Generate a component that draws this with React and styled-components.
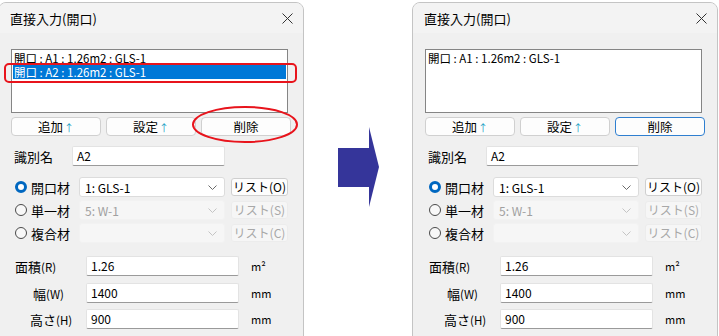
import React from 'react';
import styled, { createGlobalStyle } from 'styled-components';

const GlobalStyle = createGlobalStyle`
  html, body {
    margin: 0;
    padding: 0;
    background: #fff;
  }
  body {
    font-family: "Noto Sans CJK JP", "Noto Sans", sans-serif;
    color: #000;
  }
`

const Page = styled.div`
  width: 719px;
  height: 336px;
  overflow: hidden;
  display: flex;
  align-items: flex-start;
  padding-top: 2px;
  box-sizing: border-box;
`

const Dialog = styled.div`
  flex: none;
  width: 306px;
  height: 352px;
  box-sizing: border-box;
  margin-left: ${p => p.$offset || 0}px;
  border: 1px solid #c4c4c4;
  border-radius: 8px 8px 0 0;
  background: #f0f0f0;
  overflow: hidden;
`

const TitleBar = styled.div`
  height: 30px;
  display: flex;
  align-items: center;
  justify-content: space-between;
  padding: 0 10px 0 11px;
  background: #f3f3f3;
  font-size: 13px;
`

const Close = styled.svg`
  width: 11px;
  height: 11px;
`

const ListBox = styled.div`
  position: relative;
  margin: 16px 0 0 12px;
  width: 277px;
  height: 64px;
  box-sizing: border-box;
  border: 1px solid #858585;
  background: #fff;
  padding: 1px;
`

const ListItem = styled.div`
  height: 14px;
  font-size: 11.5px;
  line-height: 14px;
  padding-left: 1px;
  white-space: nowrap;
  background: ${p => (p.$selected ? '#0078d7' : 'transparent')};
  color: ${p => (p.$selected ? '#fff' : '#000')};
`

const RedBox = styled.div`
  position: absolute;
  left: -8px;
  top: 13px;
  width: 293px;
  height: 20px;
  box-sizing: border-box;
  border: 2px solid #e8141c;
  border-radius: 5px;
`

const ButtonRow = styled.div`
  position: relative;
  margin: 4px 0 0 12px;
  display: grid;
  grid-template-columns: repeat(3, 90px);
  gap: 5px;
  height: 19px;
`

const PushButton = styled.div`
  box-sizing: border-box;
  height: 19px;
  border: 1px solid ${p => (p.$focus ? '#2f7fd0' : '#d0d0d0')};
  border-radius: 4px;
  background: #fdfdfd;
  font-size: 12.5px;
  line-height: 17px;
  text-align: center;
`

const UpMark = styled.span`
  color: #1b9fc4;
  font-size: 10px;
  margin-left: 1px;
`

const Ellipse = styled.svg`
  position: absolute;
  left: 181px;
  top: -11px;
  width: 106px;
  height: 37px;
  overflow: visible;
`

const Row = styled.div`
  display: flex;
  align-items: center;
  height: 20px;
  margin-top: ${p => p.$top}px;
  padding-left: ${p => p.$indent}px;
`

const Label = styled.div`
  width: ${p => p.$width}px;
  flex: none;
  font-size: 13px;
  white-space: nowrap;
`

const Key = styled.span`
  font-size: 11.5px;
`

const TextBox = styled.div`
  box-sizing: border-box;
  width: 153px;
  height: 20px;
  background: #fff;
  border: 1px solid #e3e3e3;
  border-bottom-color: #9a9a9a;
  border-radius: 2px;
  padding-left: 4px;
  font-size: 12px;
  line-height: 18px;
`

const Radio = styled.div`
  flex: none;
  box-sizing: border-box;
  width: 12px;
  height: 12px;
  border-radius: 50%;
  margin-right: 4px;
  border: ${p => (p.$on ? '3.5px solid #0067c0' : '1px solid #4a4a4a')};
  background: ${p => (p.$on ? '#fff' : '#f8f8f8')};
`

const Select = styled.div`
  box-sizing: border-box;
  width: 146px;
  height: 20px;
  display: flex;
  align-items: center;
  justify-content: space-between;
  padding: 0 7px 0 5px;
  background: ${p => (p.$disabled ? '#f6f6f6' : '#fff')};
  border: 1px solid ${p => (p.$disabled ? '#f2f2f2' : '#dcdcdc')};
  border-radius: 3px;
  font-size: 12px;
  color: ${p => (p.$disabled ? '#a0a0a0' : '#000')};
`

const Chevron = styled.svg`
  width: 9px;
  height: 5px;
`

const ListButton = styled.div`
  box-sizing: border-box;
  width: 57px;
  height: 18px;
  margin-left: 6px;
  border: 1px solid ${p => (p.$disabled ? '#ececec' : '#cfcfcf')};
  border-radius: 3px;
  background: ${p => (p.$disabled ? '#f6f6f6' : '#fdfdfd')};
  color: ${p => (p.$disabled ? '#a8a8a8' : '#000')};
  font-size: 12px;
  line-height: 16px;
  text-align: center;
`

const Unit = styled.div`
  margin-left: 12px;
  font-size: 11px;
`

const ArrowCol = styled.div`
  flex: 1;
  display: flex;
  justify-content: center;
  padding-top: 125px;
`

const Chev = ({ light }) => (
  <Chevron viewBox="0 0 9 5">
    <polyline points="0.5,0.5 4.5,4.5 8.5,0.5" fill="none" stroke={light ? '#c4c4c4' : '#6a6a6a'} strokeWidth="1" />
  </Chevron>
)

const DirectInput = ({ items, selected, annotate, focusDelete, offset }) => (
  <Dialog $offset={offset}>
    <TitleBar>
      <span>直接入力(開口)</span>
      <Close viewBox="0 0 11 11">
        <path d="M0.5 0.5 L10.5 10.5 M10.5 0.5 L0.5 10.5" stroke="#333" strokeWidth="1" />
      </Close>
    </TitleBar>

    <ListBox>
      {items.map((t, i) => (
        <ListItem key={t} $selected={i === selected}>{t}</ListItem>
      ))}
      {annotate && <RedBox />}
    </ListBox>

    <ButtonRow>
      <PushButton>追加<UpMark>↑</UpMark></PushButton>
      <PushButton>設定<UpMark>↑</UpMark></PushButton>
      <PushButton $focus={focusDelete}>削除</PushButton>
      {annotate && (
        <Ellipse viewBox="0 0 106 37">
          <ellipse cx="53" cy="18.5" rx="52" ry="17.5" fill="none" stroke="#e8141c" strokeWidth="2" />
        </Ellipse>
      )}
    </ButtonRow>

    <Row $top={10} $indent={15}>
      <Label $width={58}>識別名</Label>
      <TextBox>A2</TextBox>
    </Row>

    <Row $top={11} $indent={16}>
      <Radio $on />
      <Label $width={48}>開口材</Label>
      <Select>1: GLS-1<Chev /></Select>
      <ListButton>リスト(O)</ListButton>
    </Row>
    <Row $top={3} $indent={16}>
      <Radio />
      <Label $width={48}>単一材</Label>
      <Select $disabled>5: W-1<Chev light /></Select>
      <ListButton $disabled>リスト(S)</ListButton>
    </Row>
    <Row $top={3} $indent={16}>
      <Radio />
      <Label $width={48}>複合材</Label>
      <Select $disabled><span /><Chev light /></Select>
      <ListButton $disabled>リスト(C)</ListButton>
    </Row>

    <Row $top={13} $indent={16}>
      <Label $width={71}>面積<Key>(R)</Key></Label>
      <TextBox>1.26</TextBox>
      <Unit>m²</Unit>
    </Row>
    <Row $top={7} $indent={34}>
      <Label $width={53}>幅<Key>(W)</Key></Label>
      <TextBox>1400</TextBox>
      <Unit>mm</Unit>
    </Row>
    <Row $top={6} $indent={31}>
      <Label $width={56}>高さ<Key>(H)</Key></Label>
      <TextBox>900</TextBox>
      <Unit>mm</Unit>
    </Row>
  </Dialog>
)

const App = () => {
  const row1 = '開口 : A1 : 1.26m2 : GLS-1'
  const row2 = '開口 : A2 : 1.26m2 : GLS-1'
  return (
    <>
      <GlobalStyle />
      <Page>
        <DirectInput offset={-2} items={[row1, row2]} selected={1} annotate />
        <ArrowCol>
          <svg width="41" height="80" viewBox="0 0 41 80">
            <polygon points="0,21 31,21 31,0 41,40 31,80 31,60 0,60" fill="#35359a" />
          </svg>
        </ArrowCol>
        <DirectInput items={[row1]} selected={-1} focusDelete />
        <div style={{ width: 1, flex: 'none' }} />
      </Page>
    </>
  )
}

export default App;
